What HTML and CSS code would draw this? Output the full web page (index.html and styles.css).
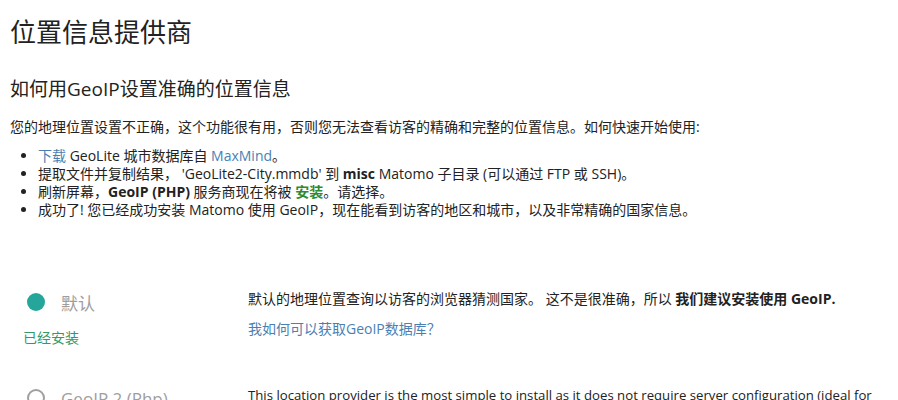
FILE: index.html
```html
<!DOCTYPE html>
<html lang="zh-CN">
<head>
<meta charset="utf-8">
<title>位置信息提供商</title>
<link rel="stylesheet" href="styles.css">
</head>
<body>
<div class="page">
  <h1 class="title">位置信息提供商</h1>
  <h2 class="subtitle">如何用GeoIP设置准确的位置信息</h2>
  <p class="intro">您的地理位置设置不正确，这个功能很有用，否则您无法查看访客的精确和完整的位置信息。如何快速开始使用:</p>
  <ul class="steps">
    <li><a class="link" href="#">下载</a> GeoLite 城市数据库自 <a class="link" href="#">MaxMind</a>。</li>
    <li>提取文件并复制结果， 'GeoLite2-City.mmdb' 到 <b>misc</b> Matomo 子目录 (可以通过 FTP 或 SSH)。</li>
    <li>刷新屏幕，<b>GeoIP (PHP)</b> 服务商现在将被 <span class="ok">安装</span>。请选择。</li>
    <li>成功了! 您已经成功安装 Matomo 使用 GeoIP，现在能看到访客的地区和城市，以及非常精确的国家信息。</li>
  </ul>

  <div class="provider">
    <div class="prov-left">
      <label class="radio"><span class="dot checked"></span><span class="prov-name">默认</span></label>
      <div class="installed">已经安装</div>
    </div>
    <div class="prov-right">
      <p class="desc">默认的地理位置查询以访客的浏览器猜测国家。 这不是很准确，所以 <b>我们建议安装使用 GeoIP.</b></p>
      <p class="desc"><a class="link" href="#">我如何可以获取GeoIP数据库？</a></p>
    </div>
  </div>

  <div class="provider second">
    <div class="prov-left">
      <label class="radio"><span class="dot"></span><span class="prov-name">GeoIP 2 (Php)</span></label>
    </div>
    <div class="prov-right">
      <p class="desc en">This location provider is the most simple to install as it does not require server configuration (ideal for shared hosting!).</p>
    </div>
  </div>
</div>
</body>
</html>
```

FILE: styles.css
```css
html, body {
  margin: 0;
  padding: 0;
  background: #ffffff;
}
body {
  font-family: "Open Sans", "Noto Sans CJK SC", sans-serif;
  color: #222222;
  font-size: 14px;
}
.page {
  padding: 14px 10px 0 10px;
}
.title {
  margin: 0;
  font-size: 26px;
  font-weight: 400;
  line-height: 36px;
}
.subtitle {
  margin: 26px 0 0 0;
  font-size: 19px;
  font-weight: 400;
  line-height: 26px;
}
.intro {
  margin: 16px 0 0 0;
  line-height: 18px;
}
.steps {
  margin: 11px 0 0 0;
  padding-left: 28px;
  line-height: 18px;
}
.steps b, .desc b {
  font-weight: 700;
}
.link {
  color: #4b7fb3;
  text-decoration: none;
}
.ok {
  color: #2e8b2e;
  font-weight: 700;
}
.provider {
  display: grid;
  grid-template-columns: 225px 1fr;
  padding-left: 13px;
  margin-top: 71px;
}
.provider.second {
  margin-top: 36px;
}
.radio {
  display: flex;
  align-items: center;
  gap: 16px;
  padding-left: 4px;
  height: 24px;
}
.dot {
  width: 18px;
  height: 18px;
  border-radius: 50%;
  box-sizing: border-box;
  border: 2px solid #a0a0a0;
}
.dot.checked {
  border: none;
  background: #26a69a;
}
.prov-name {
  font-size: 17px;
  color: #9e9e9e;
}
.installed {
  margin-top: 14px;
  color: #339966;
  font-size: 14px;
  line-height: 20px;
}
.desc {
  margin: 0 0 12px 0;
  line-height: 18px;
}
.desc.en {
  font-size: 13.2px;
}
```
